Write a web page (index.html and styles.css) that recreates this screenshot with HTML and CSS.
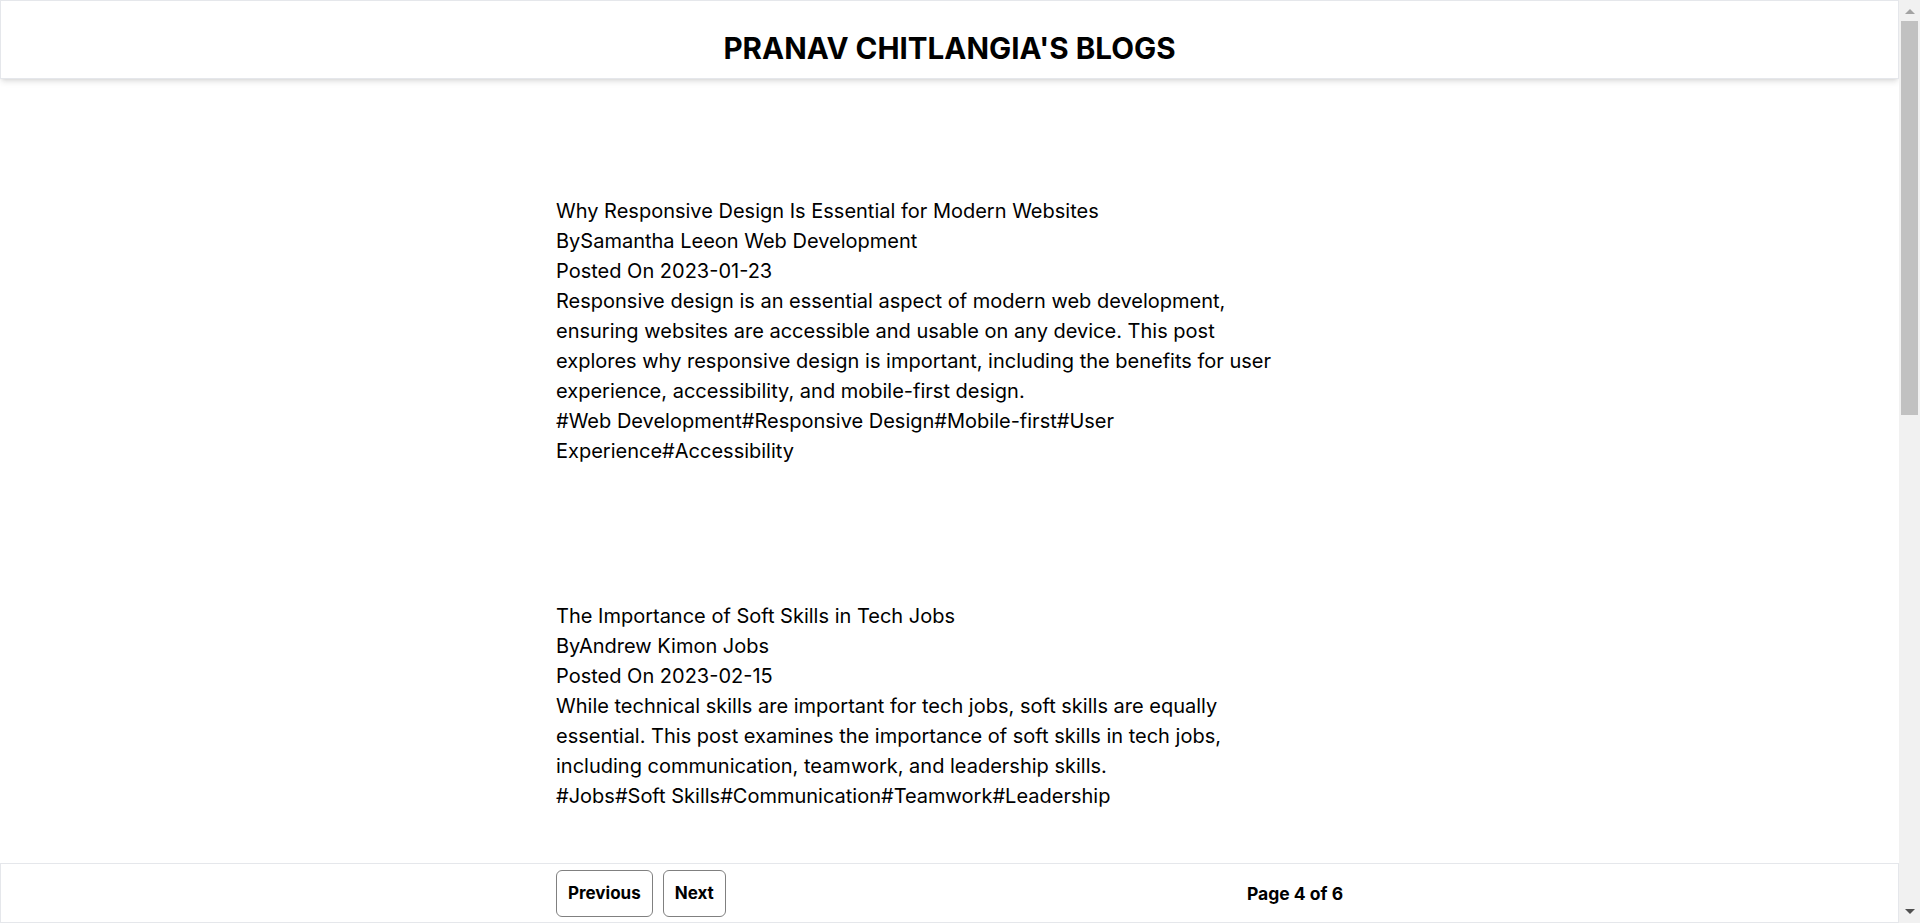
FILE: index.html
```html
<!DOCTYPE html>
<html lang="en">
<head>
<meta charset="utf-8">
<title>Pranav Chitlangia's Blogs</title>
<link rel="stylesheet" href="styles.css">
</head>
<body>
<header class="site-header">
  <h1 class="site-title">PRANAV CHITLANGIA'S BLOGS</h1>
</header>
<main class="posts">
  <article class="post">
    <div class="post-title">Why Responsive Design Is Essential for Modern Websites</div>
    <div class="post-meta">BySamantha Leeon Web Development</div>
    <div class="post-date">Posted On 2023-01-23</div>
    <p class="post-body">Responsive design is an essential aspect of modern web development, ensuring websites are accessible and usable on any device. This post explores why responsive design is important, including the benefits for user experience, accessibility, and mobile-first design.</p>
    <div class="post-tags">#Web Development#Responsive Design#Mobile-first#User Experience#Accessibility</div>
  </article>
  <article class="post">
    <div class="post-title">The Importance of Soft Skills in Tech Jobs</div>
    <div class="post-meta">ByAndrew Kimon Jobs</div>
    <div class="post-date">Posted On 2023-02-15</div>
    <p class="post-body">While technical skills are important for tech jobs, soft skills are equally essential. This post examines the importance of soft skills in tech jobs, including communication, teamwork, and leadership skills.</p>
    <div class="post-tags">#Jobs#Soft Skills#Communication#Teamwork#Leadership</div>
  </article>
</main>
<footer class="pager">
  <div class="pager-inner">
    <div class="pager-buttons">
      <button class="pager-btn" type="button">Previous</button>
      <button class="pager-btn" type="button">Next</button>
    </div>
    <div class="pager-status">Page 4 of 6</div>
  </div>
</footer>
<div class="scrollbar" aria-hidden="true">
  <span class="scroll-arrow scroll-up"></span>
  <span class="scroll-thumb"></span>
  <span class="scroll-arrow scroll-down"></span>
</div>
</body>
</html>
```
FILE: styles.css
```css
* {
  box-sizing: border-box;
}

html, body {
  margin: 0;
  padding: 0;
}

body {
  font-family: Inter, "Noto Sans", "Liberation Sans", sans-serif;
  color: #000;
  background: #fff;
  margin-right: 21px;
}

.site-header {
  border: 1px solid #e5e7eb;
  background: #fff;
  box-shadow: 0 4px 6px -1px rgba(0, 0, 0, 0.1), 0 2px 4px -2px rgba(0, 0, 0, 0.1);
  padding: 29px 0 12px;
  text-align: center;
}

.site-title {
  margin: 0;
  font-size: 29.6px;
  line-height: 36px;
  font-weight: 700;
}

.posts {
  width: 787px;
  margin: 0 auto;
  padding: 117px 0 0;
  min-height: 2050px;
  display: flex;
  flex-direction: column;
  gap: 135px;
}

.post {
  max-width: 740px;
  font-size: 20px;
  line-height: 30px;
}

.post-body {
  margin: 0;
}

.pager {
  position: fixed;
  left: 0;
  right: 21px;
  bottom: 0;
  height: 60px;
  background: #fff;
  border: 1px solid #e5e7eb;
  display: flex;
  align-items: center;
}

.pager-inner {
  width: 787px;
  margin: 0 auto;
  display: flex;
  align-items: center;
  justify-content: space-between;
}

.pager-buttons {
  display: flex;
  gap: 10px;
}

.pager-btn {
  font-family: inherit;
  font-size: 17px;
  line-height: 27px;
  font-weight: 700;
  color: #000;
  background: #fff;
  border: 1px solid #808080;
  border-radius: 6px;
  padding: 9px 11px;
}

.pager-status {
  font-size: 17.5px;
  font-weight: 700;
}

/* decorative page scrollbar, as seen in the reference */
.scrollbar {
  position: fixed;
  top: 0;
  right: 0;
  bottom: 0;
  width: 21px;
  background: #f1f1f1;
  display: flex;
  flex-direction: column;
  align-items: center;
}

.scroll-arrow {
  width: 0;
  height: 0;
  border-left: 5px solid transparent;
  border-right: 5px solid transparent;
}

.scroll-up {
  margin-top: 9px;
  border-bottom: 5px solid #a3a3a3;
}

.scroll-thumb {
  margin-top: 7px;
  width: 17px;
  height: 394px;
  background: #c1c1c1;
}

.scroll-down {
  margin-top: auto;
  margin-bottom: 9px;
  border-top: 5px solid #505050;
}
```
